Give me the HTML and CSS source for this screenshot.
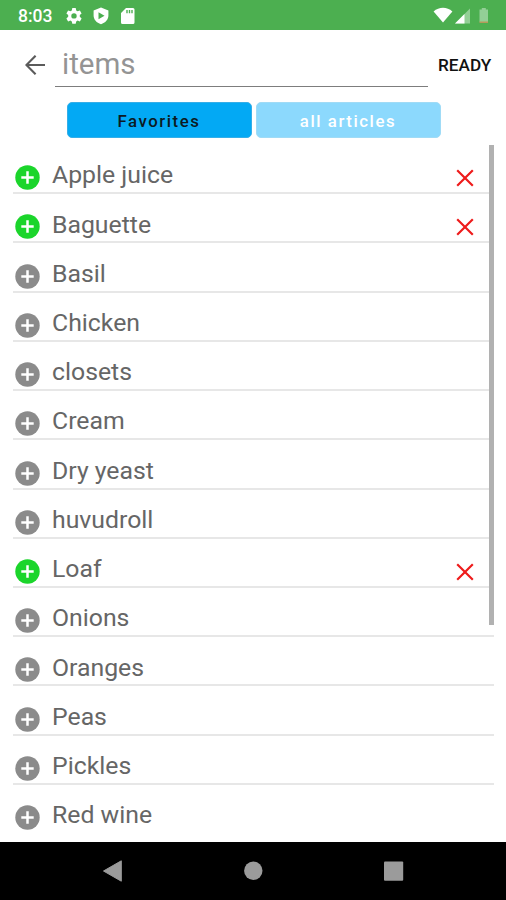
FILE: index.html
```html
<!DOCTYPE html>
<html lang="en">
<head>
<meta charset="utf-8">
<title>Items</title>
<link rel="stylesheet" href="styles.css">
</head>
<body>
<svg class="defs" width="0" height="0" aria-hidden="true">
  <symbol id="add" viewBox="0 0 25 25"><circle cx="12.5" cy="12.5" r="12.2" fill="currentColor"/><path d="M12.5 6.300v12.400M6.300 12.500h12.400" stroke="#fff" stroke-width="2.500"/></symbol>
  <symbol id="remove" viewBox="0 0 18 18"><path d="M1.200 1.200l15.600 15.600M16.800 1.200L1.200 16.800" stroke="currentColor" stroke-width="2.200"/></symbol>
</svg>
<div class="screen">
  <div class="status">
    <span class="time">8:03</span>
    <svg class="left-icons" width="72" height="18" viewBox="0 0 72 18" fill="#fff">
      <path fill-rule="evenodd" d="M6.300 1h3.400l.5 2.400 1.400.8 2.300-.8 1.700 3-1.800 1.600v1.800l1.800 1.600-1.700 3-2.300-.8-1.400.8-.5 2.400H6.300l-.5-2.400-1.400-.8-2.300.8-1.700-3L2.200 9.800V8L.4 6.400l1.700-3 2.300.8 1.400-.8zM8 6.200a2.700 2.700 0 1 0 0 5.400 2.700 2.700 0 0 0 0-5.400z"/>
      <path fill-rule="evenodd" d="M35 .6l7.400 3v4.900c0 4-3 7.300-7.400 8.700-4.400-1.400-7.400-4.700-7.400-8.700V3.600zM32.500 5.200v7l6-3.500z"/>
      <path fill-rule="evenodd" d="M60 1h7a1.500 1.500 0 0 1 1.500 1.500v13A1.500 1.500 0 0 1 67 17H56.500A1.500 1.500 0 0 1 55 15.500V6zM60.300 3v3.200h1.400V3zm2.500 0v3.200h1.400V3zm2.500 0v3.200h1.400V3z"/>
    </svg>
    <svg class="right-icons" width="58" height="18" viewBox="0 0 58 18">
      <path d="M.6 4.400C6-.3 14-.3 19.400 4.400L10 15.600z" fill="#fff"/>
      <path d="M22 16.500L37 1.500v15z" fill="#fff" opacity=".4"/>
      <path d="M22 16.500L31.500 7v9.500z" fill="#fff"/>
      <path d="M46.500 2.500h2.300V1h4v1.500h2.200V15h-8.500z" fill="#fff" opacity=".4"/>
      <path d="M46.500 14.500h8.500v1.500h-8.500z" fill="#b59a5a"/>
    </svg>
  </div>
  <header class="search">
    <svg class="back" width="21" height="21" viewBox="0 0 21 21" fill="none" stroke="#5b5b5b" stroke-width="2.100"><path d="M20 10H2M10.600.7l-9.200 9.300 9.200 9.300"/></svg>
    <div class="field">items</div>
    <div class="ready">READY</div>
  </header>
  <div class="tabs">
    <div class="tab active">Favorites</div>
    <div class="tab">all articles</div>
  </div>
  <main class="list">
    <div class="row on"><svg class="add"><use href="#add"/></svg><span class="name">Apple juice</span><svg class="remove"><use href="#remove"/></svg></div>
    <div class="row on"><svg class="add"><use href="#add"/></svg><span class="name">Baguette</span><svg class="remove"><use href="#remove"/></svg></div>
    <div class="row"><svg class="add"><use href="#add"/></svg><span class="name">Basil</span></div>
    <div class="row"><svg class="add"><use href="#add"/></svg><span class="name">Chicken</span></div>
    <div class="row"><svg class="add"><use href="#add"/></svg><span class="name">closets</span></div>
    <div class="row"><svg class="add"><use href="#add"/></svg><span class="name">Cream</span></div>
    <div class="row"><svg class="add"><use href="#add"/></svg><span class="name">Dry yeast</span></div>
    <div class="row"><svg class="add"><use href="#add"/></svg><span class="name">huvudroll</span></div>
    <div class="row on"><svg class="add"><use href="#add"/></svg><span class="name">Loaf</span><svg class="remove"><use href="#remove"/></svg></div>
    <div class="row"><svg class="add"><use href="#add"/></svg><span class="name">Onions</span></div>
    <div class="row"><svg class="add"><use href="#add"/></svg><span class="name">Oranges</span></div>
    <div class="row"><svg class="add"><use href="#add"/></svg><span class="name">Peas</span></div>
    <div class="row"><svg class="add"><use href="#add"/></svg><span class="name">Pickles</span></div>
    <div class="row"><svg class="add"><use href="#add"/></svg><span class="name">Red wine</span></div>
    <div class="scrollbar"></div>
  </main>
  <nav class="navbar">
    <svg width="20" height="22" viewBox="0 0 20 22" fill="#9b9b9b"><path d="M18.300.8v20.400L.5 11z" stroke="#9b9b9b" stroke-linejoin="round"/></svg>
    <svg width="20" height="22" viewBox="0 0 20 22" fill="#9b9b9b"><circle cx="10.300" cy="10.700" r="9.200"/></svg>
    <svg width="20" height="22" viewBox="0 0 20 22" fill="#9b9b9b"><rect x="0" y="1.500" width="19.200" height="19.200" rx="1"/></svg>
  </nav>
</div>
</body>
</html>
```
FILE: styles.css
```css
body {
  margin: 0;
  background: #fff;
  font-family: Roboto, "Liberation Sans", sans-serif;
}

.defs {
  display: block;
  height: 0;
}

.screen {
  display: flex;
  flex-direction: column;
  width: 506px;
  height: 900px;
  overflow: hidden;
}

.status {
  display: flex;
  align-items: center;
  box-sizing: border-box;
  height: 30px;
  padding: 2px 15px 0 18px;
  background: #4caf50;
  color: #fff;
}

.time {
  width: 48px;
  font-size: 17.5px;
  font-weight: 500;
  line-height: 20px;
}

.right-icons {
  margin-left: auto;
}

.search {
  display: flex;
  height: 72px;
}

.back {
  margin: 25px 9px 0 25px;
}

.field {
  box-sizing: border-box;
  width: 373px;
  height: 57px;
  padding: 16px 0 0 7px;
  border-bottom: 1px solid #7d7d7d;
  color: #949494;
  font-size: 29.5px;
  line-height: 36px;
}

.ready {
  margin: 25px 0 0 10px;
  color: #111;
  font-size: 17.2px;
  font-weight: 500;
  line-height: 20px;
}

.tabs {
  display: flex;
  gap: 4px;
  height: 43px;
  padding-left: 66.5px;
}

.tab {
  box-sizing: border-box;
  width: 185px;
  height: 36px;
  border: 1px solid #a0dbf6;
  border-radius: 5px;
  background: #8cd9fd;
  color: #fff;
  font-size: 16.8px;
  font-weight: 500;
  letter-spacing: 1.55px;
  line-height: 37px;
  text-align: center;
}

.tab.active {
  border-color: #35aee8;
  background: #03a9f4;
  color: #0c1a22;
}

.list {
  position: relative;
  flex: none;
  height: 697px;
}

.row {
  display: flex;
  box-sizing: border-box;
  height: 49.23px;
  margin: 0 12px 0 13px;
  border-bottom: 2px solid #e7e7e7;
  color: #8b8b8b;
}

.row:nth-child(14) {
  border-bottom: 0;
}

.row.on {
  color: #1bd52b;
}

.add {
  width: 25px;
  height: 25px;
  margin: 20.2px 12px 0 2px;
}

.name {
  margin-top: 15.4px;
  color: #666;
  font-size: 24.8px;
  line-height: 30px;
}

.remove {
  width: 18px;
  height: 18px;
  margin: 24px 20.5px 0 auto;
  color: #ee1c1c;
}

.scrollbar {
  position: absolute;
  top: 0;
  right: 12px;
  width: 5px;
  height: 480px;
  background: #b1b1b1;
}

.navbar {
  display: flex;
  flex: none;
  align-items: center;
  justify-content: center;
  gap: 120.5px;
  box-sizing: border-box;
  height: 58px;
  background: #000;
}
```
